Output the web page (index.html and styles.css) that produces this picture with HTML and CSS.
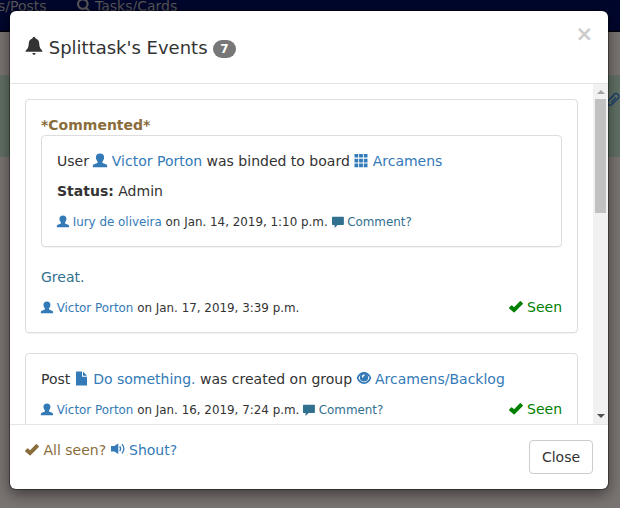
FILE: index.html
```
<!DOCTYPE html>
<html lang="en">
<head>
<meta charset="utf-8">
<title>Splittask's Events</title>
<link rel="stylesheet" href="styles.css">
</head>
<body>
<svg class="defs" aria-hidden="true">
  <symbol id="bell" viewBox="0 0 18 18"><path d="M9 0c.9 0 1.500.6 1.600 1.400 2.300.7 3.400 2.300 3.600 4.800.2 3 .6 4.600 1.800 6.100.8.8 1.400 1.300 1.400 2.500H.6c0-1.200.6-1.700 1.400-2.500 1.200-1.500 1.600-3.100 1.800-6.100C4 3.700 5.100 2.100 7.400 1.400 7.500.6 8.100 0 9 0zM7.300 16h3.400c-.2 1.200-.8 1.800-1.700 1.800S7.500 17.200 7.300 16z"/></symbol>
  <symbol id="user" viewBox="0 0 14 14"><path d="M7-.6c2.800 0 4.100 1.500 4.100 3.900 0 1.800-.6 3.100-1.600 4.200-.4.900-.1 1.400.7 1.700l2.800 1c.8.400 1.200.8 1.200 1.500v1.500H-.2v-1.500c0-.7.4-1.100 1.200-1.500l2.800-1c.8-.3 1.100-.8.700-1.700-1-1.100-1.600-2.400-1.600-4.200C2.900.9 4.200-.6 7-.6z"/></symbol>
  <symbol id="grid" viewBox="0 0 14 14"><path d="M.5 0h3.700v3.600H.5zM5.100 0h3.800v3.600H5.100zM9.800 0h3.700v3.600H9.800zM.5 4.700h3.700v3.700H.5zM5.100 4.700h3.800v3.700H5.100zM9.800 4.700h3.700v3.700H9.800zM.5 9.500h3.700v3.700H.5zM5.100 9.500h3.800v3.700H5.100zM9.800 9.500h3.700v3.700H9.800z"/></symbol>
  <symbol id="comment" viewBox="0 0 14 14"><path d="M.8.800h12.400q.8 0 .8.800v8.200q0 .8-.8.800H6.500L3 14V10.600H.8q-.8 0-.8-.8V1.600q0-.8.8-.8z"/></symbol>
  <symbol id="file" viewBox="0 0 14 14"><path d="M1-.5h6v5.300h5V13.500H1zM8-.5l4 4.300H8z"/></symbol>
  <symbol id="ok" viewBox="0 0 14 14"><path d="M.2 7.500l2-2.100q.4-.4.900 0l2 1.900 5.800-6q.5-.4.900 0l2 1.900q.4.400 0 .9l-8.200 8.200q-.5.400-1 0L.2 8.400q-.4-.5 0-.9z"/></symbol>
  <symbol id="eye" viewBox="0 0 14 14"><path fill-rule="evenodd" d="M7 0c3.600 0 6.100 2.500 7.300 6-1.300 3.600-3.900 6-7.300 6S1-2.400-.3 6C.9 2.500 3.400 0 7 0z" visibility="hidden"/><path fill-rule="evenodd" d="M7 .1c3.600 0 6 2.400 7.300 5.900C13 9.500 10.400 11.900 7 11.900S1 9.500-.3 6C1 2.500 3.400.1 7 .1zM3.700 3C2.700 3.700 2 4.800 1.500 6c1.200 2.500 3.100 4.300 5.500 4.300S11.300 8.500 12.500 6C12 4.800 11.300 3.700 10.300 3c.6.700.9 1.500.9 2.500 0 2.400-1.800 4.100-4.200 4.100S2.800 7.900 2.800 5.500c0-1 .3-1.800.9-2.500zM7.300 2.400C5.800 2.200 4.600 3.400 4.900 4.900c.2.900 1.200 1 1.400.2.100-.8.500-1.100 1.100-1.400.7-.4.600-1.200-.1-1.300z"/></symbol>
  <symbol id="volume" viewBox="0 0 14 14"><path d="M0 3h3.200l4.100-2.500v10.600L3.200 8.600H0z"/><path class="wave" d="M8.700 3.500q1.900 2.300 0 4.600M11 1.200q3.700 4.600 0 9.200"/></symbol>
  <symbol id="search" viewBox="0 0 14 14"><path class="lens" d="M10.600 5.100a4.800 4.800 0 1 1-9.600 0 4.800 4.800 0 0 1 9.600 0zM8.900 8.700l4.300 4.300"/></symbol>
  <symbol id="clip" viewBox="0 0 14 14"><path class="wire" d="M3 8l5-5.500q2-2 4 0t0 4L6 12.500q-2 1.500-3.800 0-1.500-2 0-3.800L8 3.500M5 11l5-5.500"/></symbol>
</svg>

<div class="page">
  <nav class="navbar"><span class="nav-posts">s/Posts</span><span class="nav-item"><svg class="icon"><use href="#search"/></svg>Tasks/Cards</span></nav>
  <div class="strip"><svg class="icon"><use href="#clip"/></svg></div>
</div>

<div class="modal">
  <header class="modal-header">
    <h4 class="modal-title"><svg class="icon"><use href="#bell"/></svg> Splittask's Events <span class="badge">7</span></h4>
    <span class="dismiss">×</span>
  </header>
  <div class="modal-body">
    <div class="events">
      <article class="card">
        <strong class="tag">*Commented*</strong>
        <div class="card nested">
          <p>User <a><svg class="icon"><use href="#user"/></svg> Victor Porton</a> was binded to board <a><svg class="icon"><use href="#grid"/></svg> Arcamens</a></p>
          <p><strong>Status:</strong> Admin</p>
          <p><small><a><svg class="icon"><use href="#user"/></svg> Iury de oliveira</a> on Jan. 14, 2019, 1:10 p.m. <a class="teal"><svg class="icon"><use href="#comment"/></svg> Comment?</a></small></p>
        </div>
        <p class="teal">Great.</p>
        <div class="meta"><small><a><svg class="icon"><use href="#user"/></svg> Victor Porton</a> on Jan. 17, 2019, 3:39 p.m.</small><span class="seen"><svg class="icon"><use href="#ok"/></svg> Seen</span></div>
      </article>
      <article class="card">
        <p>Post <a><svg class="icon"><use href="#file"/></svg> Do something.</a> was created on group <a><svg class="icon"><use href="#eye"/></svg> Arcamens/Backlog</a></p>
        <div class="meta"><small><a><svg class="icon"><use href="#user"/></svg> Victor Porton</a> on Jan. 16, 2019, 7:24 p.m. <a class="teal"><svg class="icon"><use href="#comment"/></svg> Comment?</a></small><span class="seen"><svg class="icon"><use href="#ok"/></svg> Seen</span></div>
      </article>
    </div>
    <div class="scrollbar"><i class="arrow up"></i><i class="thumb"></i><i class="arrow down"></i></div>
  </div>
  <footer class="modal-footer">
    <div><a class="brown"><svg class="icon"><use href="#ok"/></svg> All seen?</a> <a><svg class="icon"><use href="#volume"/></svg> Shout?</a></div>
    <button class="btn">Close</button>
  </footer>
</div>
</body>
</html>
```
FILE: styles.css
```
* { box-sizing: border-box; }
body {
  margin: 0;
  width: 620px;
  height: 508px;
  overflow: hidden;
  position: relative;
  font: 14px/20px "DejaVu Sans", sans-serif;
  color: #333;
}
p, h4 { margin: 0; }
a { color: #337ab7; }
small { font-size: 85%; }
.defs { position: absolute; width: 0; height: 0; }
.defs symbol { overflow: visible; }
.icon { width: 1em; height: 1em; fill: currentColor; vertical-align: -2px; overflow: visible; }
small .icon { vertical-align: -1.5px; }
.wave, .lens, .wire { fill: none; stroke: currentColor; stroke-width: 1.3; }
.lens { stroke-width: 2.2; }
.teal { color: #31708f; }

.page { height: 508px; background: #7a7472; }
.navbar {
  height: 32px;
  background: #00062c;
  border-bottom: 1px solid #000;
  color: #555;
  display: flex;
  align-items: flex-start;
  line-height: 12px;
  margin-bottom: 43px;
}
.nav-posts { width: 79px; margin-left: -2px; }
.nav-item { display: flex; gap: 4px; white-space: nowrap; }
.nav-item .icon { margin-top: -1px; }
.strip {
  height: 82px;
  background: #617064;
  border-top: 1px solid #686f68;
  padding: 16px 0 0 606px;
  color: #1b416b;
}
.strip .icon { display: block; }

.modal {
  position: absolute;
  left: 10px;
  top: 11px;
  width: 598px;
  height: 478px;
  background: #fff;
  border-radius: 6px;
  box-shadow: 0 0 0 1px rgba(0, 0, 0, .35), 0 5px 15px rgba(0, 0, 0, .5);
  display: flex;
  flex-direction: column;
}
.modal-header {
  height: 73px;
  border-bottom: 1px solid #e5e5e5;
  padding: 0 15px;
  display: flex;
  justify-content: space-between;
}
.modal-title { font-size: 18px; font-weight: 400; line-height: 26px; padding-top: 24px; }
.modal-title .icon { vertical-align: -1px; }
.badge {
  display: inline-block;
  padding: 3px 7px;
  min-width: 10px;
  font-size: 12px;
  font-weight: 700;
  line-height: 12px;
  color: #fff;
  background: #777;
  border-radius: 10px;
  vertical-align: middle;
}
.dismiss { font-size: 21px; font-weight: 700; line-height: 21px; padding-top: 13px; color: #ccc; }
.modal-body { height: 340px; display: flex; overflow: hidden; }
.events { flex: 1; padding: 15px; }
.card {
  border: 1px solid #ddd;
  border-radius: 4px;
  box-shadow: 0 1px 1px rgba(0, 0, 0, .05);
  padding: 15px;
  margin-bottom: 20px;
}
.card p { height: 20px; margin-bottom: 10px; white-space: nowrap; }
.nested p:last-child { margin-bottom: 0; }
.card small { line-height: 20px; }
.tag { display: block; color: #8a6d3b; }
.meta { display: flex; justify-content: space-between; height: 20px; white-space: nowrap; }
.meta small { padding-top: 1px; }
.seen { color: #008000; }
.scrollbar {
  width: 15px;
  background: #f1f1f1;
  display: flex;
  flex-direction: column;
  align-items: center;
}
.thumb { width: 11px; height: 114px; background: #c1c1c1; margin: 5px 0 auto; }
.arrow { border: 4px solid transparent; }
.up { border-top: 0; border-bottom-color: #a3a3a3; margin-top: 6px; }
.down { border-bottom: 0; border-top-color: #505050; margin-bottom: 6px; }
.modal-footer {
  height: 65px;
  border-top: 1px solid #e5e5e5;
  padding: 15px;
  display: flex;
  justify-content: space-between;
}
.brown { color: #8a6d3b; }
.btn {
  font: inherit;
  color: #333;
  background: #fff;
  border: 1px solid #ccc;
  border-radius: 4px;
  width: 64px;
  height: 34px;
  padding: 0;
}
```
